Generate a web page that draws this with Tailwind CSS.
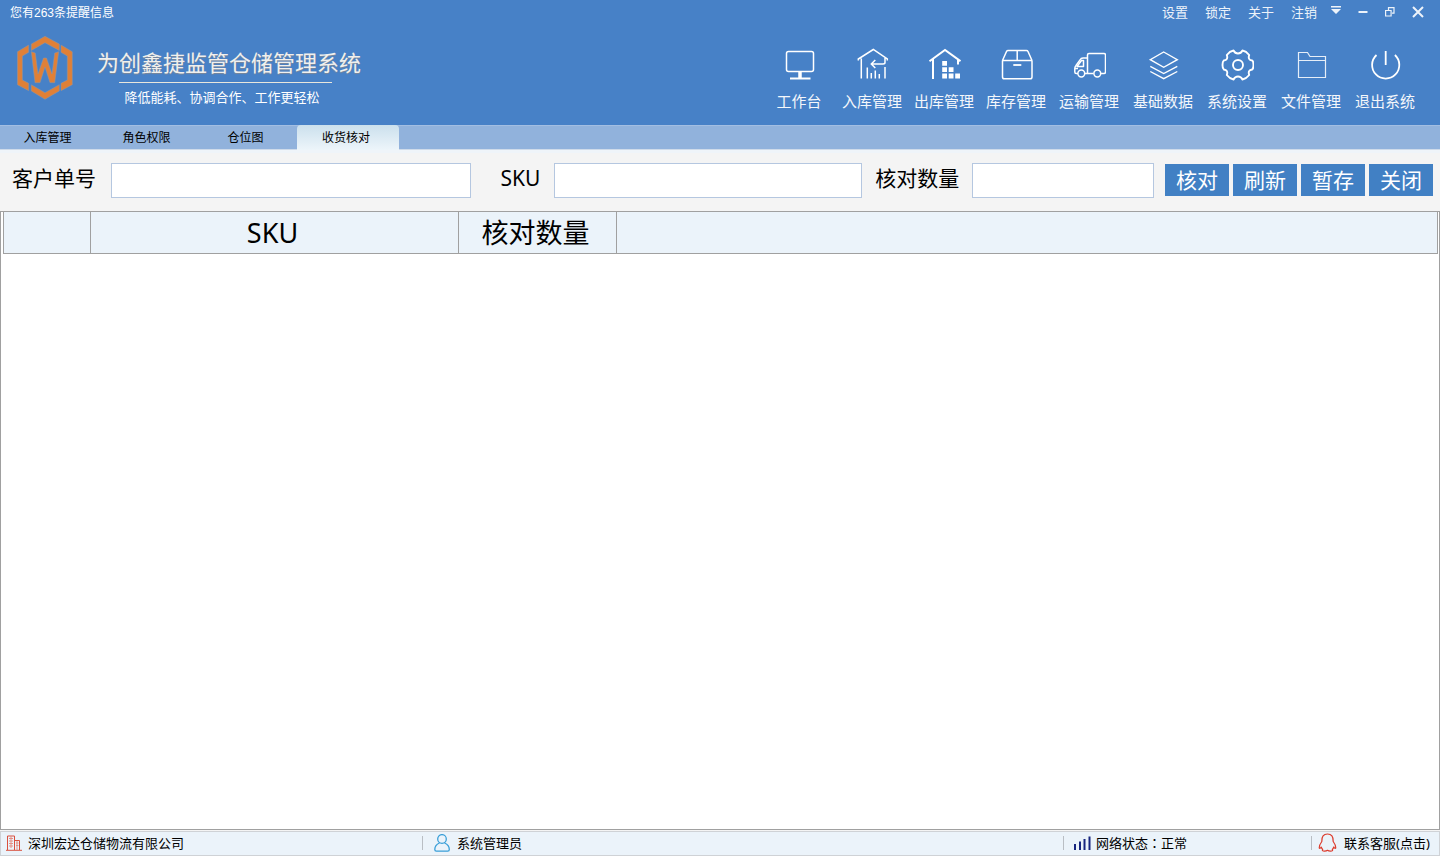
<!DOCTYPE html>
<html lang="zh-CN">
<head>
<meta charset="utf-8">
<title>为创鑫捷监管仓储管理系统</title>
<script src="https://cdn.jsdelivr.net/npm/@tailwindcss/browser@4"></script>
</head>
<body class="flex min-h-screen flex-col bg-[#f4f4f4] font-['Noto_Sans','Noto_Sans_CJK_SC',sans-serif] text-black">

<header class="flex h-[125px] justify-between bg-[#4781c7] text-white">
  <div>
    <p class="px-2.5 pt-[5px] text-[12px] leading-4">您有<span class="font-['Liberation_Sans']">263</span>条提醒信息</p>
    <div class="flex pt-[15px] pl-[17px]">
      <svg class="h-16 w-14" viewBox="0 0 56 64" fill="#e08037" stroke="#8f97a6" stroke-width=".5" aria-hidden="true">
        <path d="M14.3 8 28 .3 42.3 8v6.5L28 6.7l-13.7 7.8z"/>
        <path d="M44 9l11.3 6.7v33L44 54.7v-7.4l6.3-3.3V20L44 16.3z"/>
        <path d="M11.7 9 .4 15.7v33l11.3 6v-7.4L5.4 44V20l6.3-3.7z"/>
        <path d="M14.3 48.7 28 56.7l14.3-8V55L28 63.3 14.3 55z"/>
        <path d="M14.300 15.700l4 1.300L21 38l5.500-16h3L35 38l2.700-21 4-1.300-4 31H33L28 31l-5 15.700h-5z"/>
      </svg>
      <div class="flex flex-col items-center pt-2.5 pl-6">
        <h1 class="text-[22px] leading-8 font-normal text-[#f0f0ee] [text-shadow:0_1px_1px_#7d8797]">为创鑫捷监管仓储管理系统</h1>
        <div class="mt-1 mr-2 h-px w-[213px] bg-[#e8e6dc]"></div>
        <p class="mt-1 mr-3.5 text-[13px] leading-5">降低能耗、协调合作、工作更轻松</p>
      </div>
    </div>
  </div>

  <div class="flex flex-col items-end">
    <div class="flex items-center pt-0.5 pr-4 text-[13px] leading-5 text-[#edf3fa]">
      <div class="flex gap-[17px] pr-3.5">
        <button>设置</button><button>锁定</button><button>关于</button><button>注销</button>
      </div>
      <div class="flex items-center gap-[17px]">
        <button aria-label="菜单"><svg class="mb-1 h-2.5 w-2.5" viewBox="0 0 10 10" fill="#edf3fa"><path d="M0 1h10v1.500H0zM0 4h10L5 9z"/></svg></button>
        <button aria-label="最小化"><svg class="h-2.5 w-2.5" viewBox="0 0 10 10" fill="#edf3fa"><path d="M.5 4h9v2h-9z"/></svg></button>
        <button aria-label="还原"><svg class="h-2.5 w-2.5" viewBox="0 0 10 10" fill="none" stroke="#edf3fa" stroke-width="1.200"><path d="M.600 3.500h5.500v5.500H.600zM3.500 3V.600h5.500v5.500H7"/></svg></button>
        <button aria-label="关闭窗口"><svg class="h-3 w-3" viewBox="0 0 12 12" fill="none" stroke="#edf3fa" stroke-width="2"><path d="M1 1l10 10M11 1 1 11"/></svg></button>
      </div>
    </div>
    <nav class="flex pt-[26px] pr-[18px] text-[15px] leading-5 text-[#f4f7fb]">
      <a href="#" class="flex w-[74px] flex-col items-center gap-[9px]">
        <svg class="size-[34px]" viewBox="-1 0 34 34" fill="none" stroke="#fff" stroke-width="1.500"><rect x="3.500" y="3.500" width="27" height="20" rx="2"/><path d="M17 23.500v6.500" stroke-width="3.500"/><path d="M7 30.500h20.500" stroke-width="2"/></svg>工作台</a>
      <a href="#" class="flex w-[72px] flex-col items-center gap-[9px]">
        <svg class="size-[34px]" viewBox="-1 0 34 34" fill="none" stroke="#fff" stroke-width="1.500"><path d="M2.300 12.500V11L17.300 1.500 31.300 11v1.500M5.300 10.500V30.500M29 19v11.500M29 10v4.500q0 1.500-2 1.500H15.700M19.300 12l-4 4 4 4M11.300 19.500v11M15.300 25v5.500M19.300 22.500v8M23.300 26v4.500"/></svg>入库管理</a>
      <a href="#" class="flex w-[72px] flex-col items-center gap-[9px]">
        <svg class="size-[34px]" viewBox="-1 0 34 34" fill="none" stroke="#fff" stroke-width="2"><path d="M1.500 13.200 17 2l15.500 11.200M5 11v20M30 11v5.500"/><path fill="#fff" stroke="none" d="M14.200 13h4.800v4.800h-4.800zM14.200 19.300h4.800v4.800h-4.800zM20.700 19.300h4.800v4.800h-4.800zM14.200 25.600h4.800v4.800h-4.800zM20.700 25.600h4.800v4.800h-4.800zM27.200 25.600h4.800v4.800h-4.800z"/></svg>出库管理</a>
      <a href="#" class="flex w-[72px] flex-col items-center gap-[9px]">
        <svg class="size-[34px]" viewBox="-1 0 34 34" fill="none" stroke="#fff" stroke-width="1.500" stroke-linejoin="round"><path d="M2.500 12.500h29.500V29q0 1.800-1.800 1.800H4.300q-1.800 0-1.800-1.800zL6.500 3.500q.5-1 1.500-1h18.500q1 0 1.500 1l4 9M17.200 2.500v10"/><path d="M13.300 17h8" stroke-width="1.800"/></svg>库存管理</a>
      <a href="#" class="flex w-[74px] flex-col items-center gap-[9px]">
        <svg class="size-[34px]" viewBox="-1 0 34 34" fill="none" stroke="#fff" stroke-width="1.500" stroke-linejoin="round"><path d="M12 25.500h8.500M14.500 25.500V7q0-1.500 1.500-1.500h15q1.500 0 1.500 1.500v17q0 1.500-1.500 1.500h-3M14.500 10H10Q8 10 7 12l-4 5.500q-1.200 1.500-1.200 3V24q0 1.500 1.500 1.500H5"/><path d="M10.500 12.500H8.500L4 18.500h6.500zM2 20.500h3"/><circle cx="8.300" cy="25.500" r="3.400"/><circle cx="24.300" cy="25.500" r="3.400"/></svg>运输管理</a>
      <a href="#" class="flex w-[74px] flex-col items-center gap-[9px]">
        <svg class="size-[34px]" viewBox="-1 0 34 34" fill="none" stroke="#fff" stroke-width="1.400"><path d="M16.700 4 30.300 11.700 16.700 19.300 3.300 11.700zM3.300 18.300l13.400 7.200 13.600-7.200M3.300 23.500l13.400 7.200 13.600-7.200"/></svg>基础数据</a>
      <a href="#" class="flex w-[74px] flex-col items-center gap-[9px]">
        <svg class="size-[34px]" viewBox="-1 0 34 34" fill="none" stroke="#fff" stroke-width="1.900" stroke-linejoin="round"><circle cx="17" cy="17" r="5"/><path d="M31.200 12.500q1.300 1 1.300 4.500t-1.300 4.500q-4.700.500-3 5.500-3 3.800-6.700 4.500-1.500-3-4.500-3t-4.500 3Q8.800 30.800 5.800 27q1.700-5-3-5.500-1.300-1-1.300-4.500t1.300-4.500q4.700-.500 3-5.500 3-3.800 6.700-4.500 1.500 3 4.500 3t4.500-3Q25.200 3.200 28.200 7q-1.700 5 3 5.500z"/></svg>系统设置</a>
      <a href="#" class="flex w-[74px] flex-col items-center gap-[9px]">
        <svg class="size-[34px]" viewBox="-1 0 34 34" fill="none" stroke="#e6eef8" stroke-width="1.200"><path d="M3.500 29.500v-25h9l2.500 4h15.500v21zM3.500 12.500h27"/></svg>文件管理</a>
      <a href="#" class="flex w-[74px] flex-col items-center gap-[9px]">
        <svg class="size-[34px]" viewBox="-1 0 34 34" fill="none" stroke="#fff" stroke-width="1.800"><path d="M7.500 7a13.600 13.600 0 1 0 18.400 0M16.700 3v14"/></svg>退出系统</a>
    </nav>
  </div>
</header>

<div role="tablist" class="flex h-[25px] border-t border-b border-t-[#a3bee2] border-b-[#cfdbea] bg-[#91b2dc] text-[12px] leading-6">
  <button role="tab" class="w-[99px] pr-1">入库管理</button>
  <button role="tab" class="w-[99px] pr-1">角色权限</button>
  <button role="tab" class="w-[99px] pr-1">仓位图</button>
  <button role="tab" aria-selected="true" class="-mt-px h-[25px] w-[102px] rounded-t-sm bg-linear-to-b from-[#cbe0ed] to-[#edf5fa] pr-1">收货核对</button>
</div>

<form class="flex h-[61px] items-center border-t-3 border-[#eff4f9] pr-[7px] pb-1 pl-3 text-[21px] leading-8">
  <label for="order" class="mr-[15px] mb-1 shrink-0">客户单号</label>
  <input id="order" class="h-[35px] w-0 grow-[361] border border-[#b5c7e0] bg-white indent-2">
  <label for="sku" class="mr-3 mb-1 ml-[29px] w-[42px] shrink-0">SKU</label>
  <input id="sku" class="h-[35px] w-0 grow-[308] border border-[#b5c7e0] bg-white indent-2">
  <label for="qty" class="mr-[13px] mb-1 ml-[13px] shrink-0">核对数量</label>
  <input id="qty" class="h-[35px] w-0 grow-[181] border border-[#b5c7e0] bg-white indent-2">
  <div class="ml-[11px] flex gap-1 text-white">
    <button type="button" class="h-8 w-16 bg-[#4180c4]">核对</button>
    <button type="button" class="h-8 w-16 bg-[#4180c4]">刷新</button>
    <button type="button" class="h-8 w-16 bg-[#4180c4]">暂存</button>
    <button type="button" class="h-8 w-16 bg-[#4180c4]">关闭</button>
  </div>
</form>

<main class="flex-1 border border-[#a0a0a0] bg-white pr-px pl-0.5">
  <table class="w-full table-fixed border-separate border-spacing-0 bg-[#ebf3fa] text-[27px] leading-10">
    <thead>
      <tr class="h-[42px]">
        <th class="w-[88px] border-r border-b border-l border-[#a0a0a0] p-0"></th>
        <th class="w-[368px] border-r border-b border-[#a0a0a0] p-0 pr-1 font-normal">SKU</th>
        <th class="w-[158px] border-r border-b border-[#a0a0a0] p-0 pr-1 font-normal">核对数量</th>
        <th class="border-r border-b border-[#a0a0a0] p-0"></th>
      </tr>
    </thead>
  </table>
</main>

<footer class="mt-px flex h-[25px] items-center border border-[#cfd2d6] bg-[#ebf3fa] pb-0.5 text-[13px] leading-5">
  <div class="flex w-[421px] items-center gap-1.5 pl-[5px]">
    <svg class="size-4" viewBox="0 0 16 16" fill="none" stroke="#d9503f" aria-hidden="true"><path d="M1.500 15V1h7v14M8.500 5.500h5V15M0 15.300h16"/><path d="M3 3.500h4M3 6h4M3 8.500h4M3 11h4M10 8h2.500M10 10.500h2.500M5 1v12M11 6v9" stroke="#e58f85"/></svg>
    <span>深圳宏达仓储物流有限公司</span>
  </div>
  <div class="flex flex-1 items-center">
    <span class="h-3.5 w-px bg-[#b9bec4]"></span>
    <svg class="mr-[5px] ml-[11px] size-[18px]" viewBox="0 0 18 18" fill="none" stroke="#3a9fd8" stroke-width="1.300" aria-hidden="true"><ellipse cx="8" cy="5" rx="4.300" ry="4.400"/><path d="M5.500 9Q.800 11 .800 15.500q0 1.700 1.500 1.700h11.500q1.500 0 1.500-1.700Q15.300 11 10.500 9"/></svg>
    <span>系统管理员</span>
  </div>
  <div class="flex w-[248px] items-center">
    <span class="h-3.5 w-px bg-[#b9bec4]"></span>
    <svg class="mr-[5px] ml-2.5 h-3.5 w-[17px]" viewBox="0 0 17 14" fill="#17257f" aria-hidden="true"><path d="M0 8h2v6H0zM5 5.500h2V14H5zM9.500 3h2v11h-2zM14.500.500h2V14h-2z"/></svg>
    <span>网络状态<span lang="zh-TW" class="font-['Noto_Sans_CJK_TC']">：</span>正常</span>
  </div>
  <div class="flex w-[128px] items-center">
    <span class="h-3.5 w-px bg-[#b9bec4]"></span>
    <svg class="mr-[7px] ml-1.5 h-[19px] w-[19px]" viewBox="0 0 19 19" fill="none" stroke="#dc3b2c" stroke-width="1.200" stroke-linejoin="round" aria-hidden="true"><path d="M3.800 8.500Q3.500 1 9.500 1t5.700 7.500q2.600 3.500 2.600 6.500-.8 1-2-1-.5 1.500-1.500 2.500 1.200 1.500-1.800 1.700-2 0-3-.900-1 .900-3 .900-3-.200-1.800-1.700-1-1-1.500-2.500-1.200 2-2 1 0-3 2.600-6.500z"/></svg>
    <a href="#" class="whitespace-nowrap">联系客服(点击)</a>
  </div>
</footer>
</body>
</html>
